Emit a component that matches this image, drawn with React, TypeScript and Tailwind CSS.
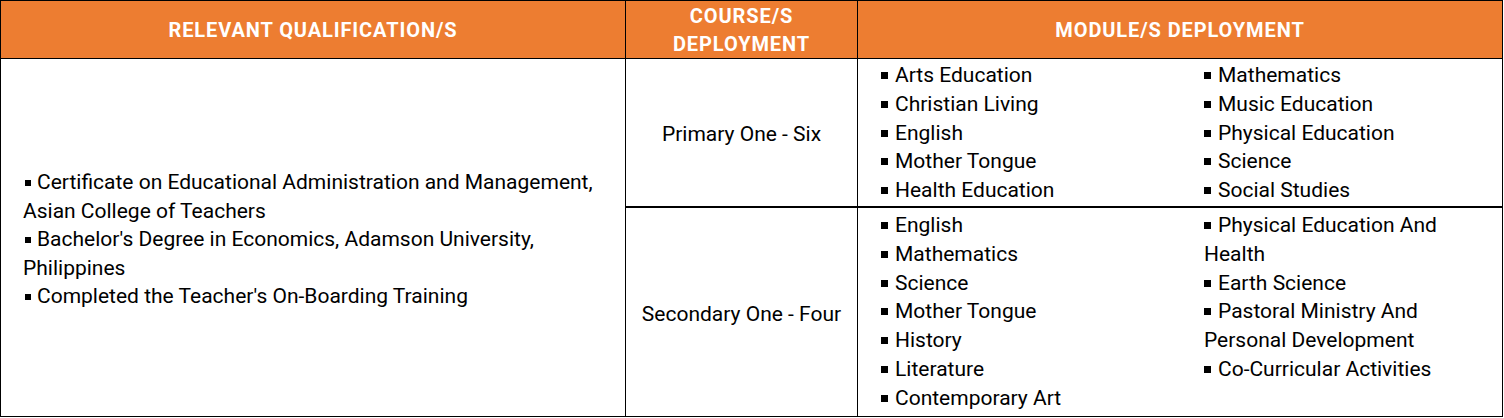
const QUALIFICATIONS = [
  "Certificate on Educational Administration and Management, Asian College of Teachers",
  "Bachelor's Degree in Economics, Adamson University, Philippines",
  "Completed the Teacher's On-Boarding Training",
];

type Item = string | string[];

const PRIMARY_LEFT: Item[] = ["Arts Education", "Christian Living", "English", "Mother Tongue", "Health Education"];
const PRIMARY_RIGHT: Item[] = ["Mathematics", "Music Education", "Physical Education", "Science", "Social Studies"];

const SECONDARY_LEFT: Item[] = [
  "English",
  "Mathematics",
  "Science",
  "Mother Tongue",
  "History",
  "Literature",
  "Contemporary Art",
];
const SECONDARY_RIGHT: Item[] = [
  ["Physical Education And", "Health"],
  "Earth Science",
  ["Pastoral Ministry And", "Personal Development"],
  "Co-Curricular Activities",
];

function Bullet({ small }: { small?: boolean }) {
  return (
    <span
      className={
        small
          ? "inline-block w-[6px] h-[6px] bg-black ml-[2px] mr-[6px] align-[3px]"
          : "inline-block w-[7px] h-[7px] bg-black mr-[7px] align-[3px]"
      }
    />
  );
}

function ModuleList({ items }: { items: Item[] }) {
  return (
    <ul>
      {items.map((item) => {
        const lines = Array.isArray(item) ? item : [item];
        return (
          <li key={lines.join(" ")}>
            <Bullet />
            {lines.map((l, i) => (
              <span key={l}>
                {i > 0 && <br />}
                {l}
              </span>
            ))}
          </li>
        );
      })}
    </ul>
  );
}

function ModuleCell({ left, right, className }: { left: Item[]; right: Item[]; className: string }) {
  return (
    <div className={"grid grid-cols-[323px_1fr] pl-[23px] leading-[28.8px] " + className}>
      <ModuleList items={left} />
      <ModuleList items={right} />
    </div>
  );
}

export default function App() {
  return (
    <div className="w-[1504px] h-[418px] bg-white text-black font-['Roboto','Liberation_Sans',sans-serif]">
      <div className="w-[1503px] border border-black">
        <div className="grid grid-cols-[625px_232px_1fr] h-[58px] bg-[#ED7D31] border-b border-black text-white font-bold text-[20px] tracking-[0.9px] text-center">
          <div className="flex items-center justify-center border-r border-black">RELEVANT QUALIFICATION/S</div>
          <div className="flex items-center justify-center border-r border-black leading-[28px]">
            COURSE/S
            <br />
            DEPLOYMENT
          </div>
          <div className="flex items-center justify-center">MODULE/S DEPLOYMENT</div>
        </div>

        <div className="grid grid-cols-[625px_232px_1fr] grid-rows-[149px_208px] text-[21px]">
          <div className="row-span-2 flex flex-col justify-center pl-[22px] pr-4 pt-[4px] border-r border-black leading-[28.6px]">
            {QUALIFICATIONS.map((q) => (
              <p key={q}>
                <Bullet small />
                {q}
              </p>
            ))}
          </div>
          <div className="flex items-center justify-center pt-[4px] border-r border-black border-b-2">Primary One - Six</div>
          <ModuleCell left={PRIMARY_LEFT} right={PRIMARY_RIGHT} className="border-b-2 border-black pt-[2px]" />
          <div className="flex items-center justify-center pt-[5px] border-r border-black">Secondary One - Four</div>
          <ModuleCell left={SECONDARY_LEFT} right={SECONDARY_RIGHT} className="pt-[3px]" />
        </div>
      </div>
    </div>
  );
}
